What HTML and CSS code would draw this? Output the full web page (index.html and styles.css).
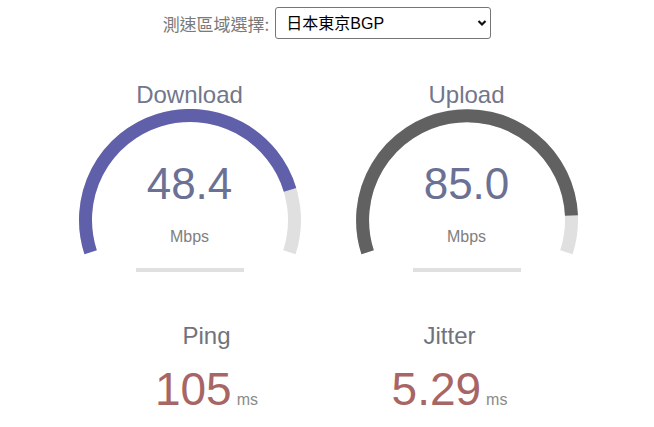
FILE: index.html
```
<!DOCTYPE html>
<html lang="zh-Hant">
<head>
<meta charset="utf-8">
<title>Speedtest</title>
<link rel="stylesheet" href="styles.css">
</head>
<body>
<div class="server-row">
  <label class="server-label" for="server">測速區域選擇:</label>
  <span class="select-wrap">
    <select id="server" class="server-select">
      <option>日本東京BGP</option>
    </select>
    <svg class="chevron" width="10" height="8" viewBox="0 0 10 8"><path d="M1.5 2 L5 5.5 L8.5 2" fill="none" stroke="#111" stroke-width="2.2"/></svg>
  </span>
</div>

<div class="gauges">
  <div class="gauge">
    <div class="gauge-title">Download</div>
    <div class="dial">
      <svg class="meter" width="270" height="170" viewBox="0 0 270 170">
        <path d="M35.62 143.29 A104.5 104.5 0 1 1 234.38 143.29" fill="none" stroke="#E0E0E0" stroke-width="13"/>
        <path d="M35.62 143.29 A104.5 104.5 0 1 1 235.04 80.78" fill="none" stroke="#6060AA" stroke-width="13"/>
        <rect x="81" y="159" width="108" height="4" fill="#E0E0E0"/>
      </svg>
      <div class="readout">
        <div class="meter-value">48.4</div>
        <div class="meter-unit">Mbps</div>
      </div>
    </div>
  </div>
  <div class="gauge">
    <div class="gauge-title">Upload</div>
    <div class="dial">
      <svg class="meter" width="270" height="170" viewBox="0 0 270 170">
        <path d="M35.62 143.29 A104.5 104.5 0 1 1 234.38 143.29" fill="none" stroke="#E0E0E0" stroke-width="13"/>
        <path d="M35.62 143.29 A104.5 104.5 0 1 1 239.48 106.5" fill="none" stroke="#616161" stroke-width="13"/>
        <rect x="81" y="159" width="108" height="4" fill="#E0E0E0"/>
      </svg>
      <div class="readout">
        <div class="meter-value">85.0</div>
        <div class="meter-unit">Mbps</div>
      </div>
    </div>
  </div>
</div>

<div class="stats">
  <div class="stat">
    <div class="stat-title">Ping</div>
    <div class="stat-line"><span class="stat-value">105</span><span class="stat-unit">ms</span></div>
  </div>
  <div class="stat">
    <div class="stat-title">Jitter</div>
    <div class="stat-line"><span class="stat-value">5.29</span><span class="stat-unit">ms</span></div>
  </div>
</div>
</body>
</html>
```

FILE: styles.css
```
html, body {
  margin: 0;
  padding: 0;
  background: #ffffff;
}

body {
  font-family: "Liberation Sans", "Noto Sans CJK TC", Arial, sans-serif;
  text-align: center;
  color: #72768c;
}

.server-row {
  display: flex;
  justify-content: center;
  align-items: center;
  gap: 6px;
  padding-top: 7px;
}

.server-label {
  font-size: 17px;
  color: #7a7a7a;
  font-family: "Noto Sans CJK TC", "Liberation Sans", sans-serif;
}

.select-wrap {
  position: relative;
  display: inline-block;
}

.server-select {
  appearance: none;
  -webkit-appearance: none;
  width: 216px;
  height: 32px;
  margin: 0;
  padding: 0 24px 0 10px;
  font-size: 16px;
  font-family: "Liberation Sans", "Noto Sans CJK TC", sans-serif;
  color: #000;
  background: #fff;
  border: 1px solid #767676;
  border-radius: 3px;
  display: block;
}

.chevron {
  position: absolute;
  right: 4px;
  top: 12px;
  pointer-events: none;
}

.gauges {
  display: flex;
  justify-content: center;
  gap: 7px;
  margin-top: 42px;
  padding-left: 2px;
}

.gauge {
  width: 270px;
}

.gauge-title,
.stat-title {
  font-size: 24px;
  line-height: 28px;
  color: #72768c;
}

.dial {
  display: grid;
}

.meter {
  grid-area: 1 / 1;
  display: block;
}

.readout {
  grid-area: 1 / 1;
  display: flex;
  flex-direction: column;
  align-items: center;
  padding-top: 50px;
}

.meter-value {
  font-size: 44px;
  line-height: 50px;
  color: #6b7195;
}

.meter-unit {
  margin-top: 19px;
  font-size: 16px;
  line-height: 18px;
  color: #808080;
}

.stats {
  display: flex;
  justify-content: center;
  gap: 5px;
  margin-top: 43px;
  padding-left: 2px;
}

.stat {
  width: 238px;
}

.stat-title {
  color: #70737c;
}

.stat-line {
  margin-top: 14px;
  line-height: 50px;
}

.stat-value {
  font-size: 46px;
  color: #a86565;
}

.stat-unit {
  font-size: 16px;
  color: #8a8a8a;
  margin-left: 5px;
}
```
